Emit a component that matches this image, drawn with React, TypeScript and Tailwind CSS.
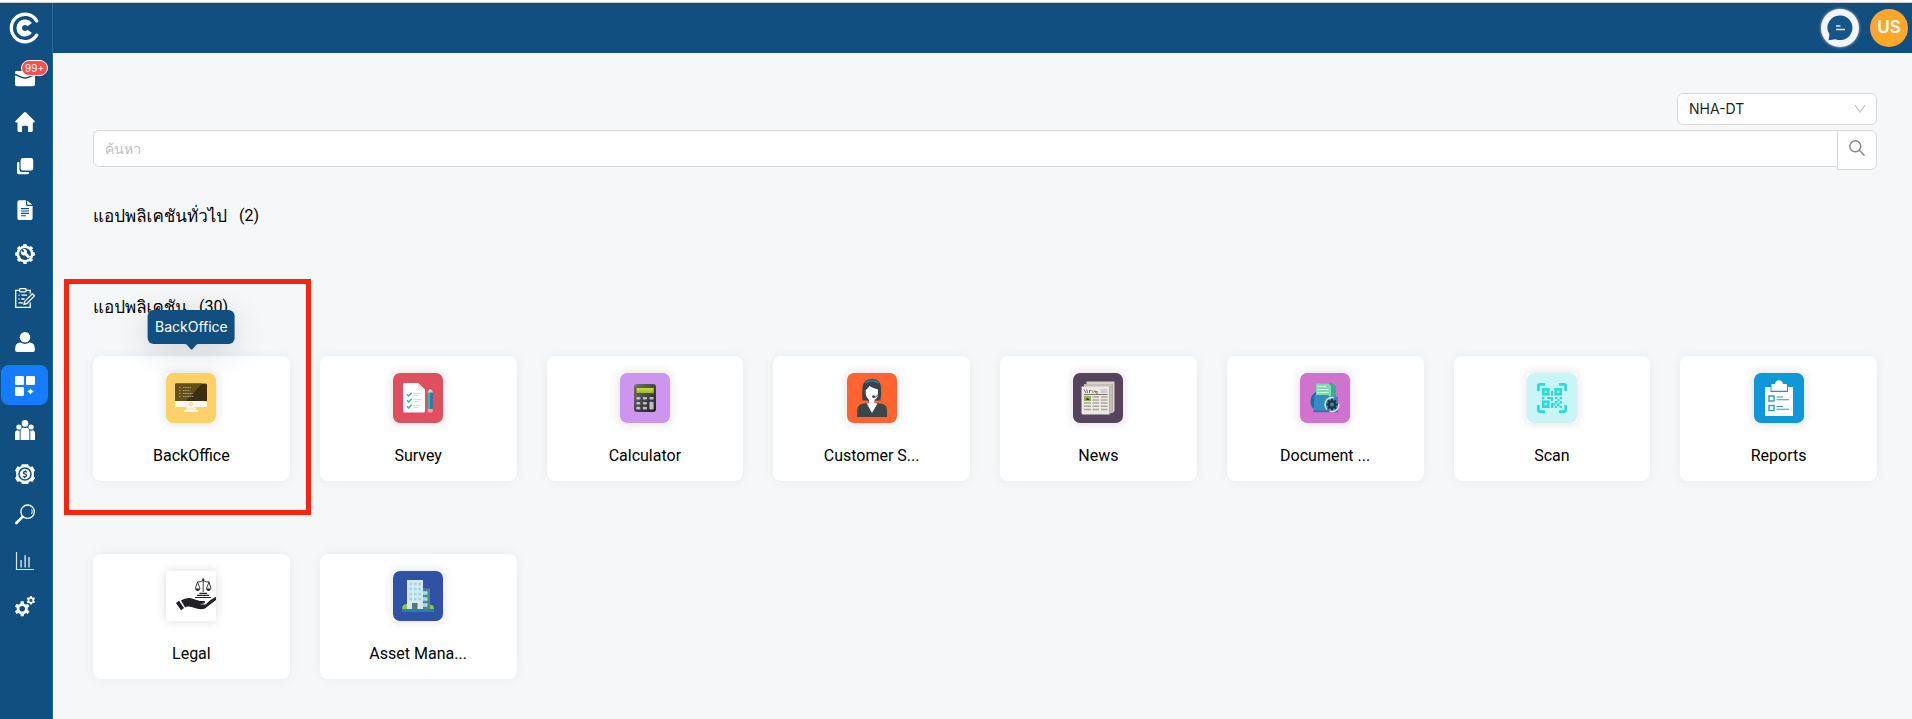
import type { ReactNode } from "react";

const NAVY = "#114f80";

/* ---------- sidebar icons, drawn on a 20 x 20 grid ---------- */

function gearPath(cx: number, cy: number, teeth: number, outer: number, inner: number) {
  const step = (Math.PI * 2) / teeth;
  const pts: string[] = [];
  for (let i = 0; i < teeth; i++) {
    const a = i * step - Math.PI / 2;
    const corners: [number, number][] = [
      [inner, -0.3],
      [outer, -0.2],
      [outer, 0.2],
      [inner, 0.3],
    ];
    for (const [r, f] of corners) {
      pts.push(`${(cx + r * Math.cos(a + f * step)).toFixed(2)} ${(cy + r * Math.sin(a + f * step)).toFixed(2)}`);
    }
  }
  return `M${pts.join("L")}Z`;
}

function Glyph({ children }: { children: ReactNode }) {
  return (
    <svg viewBox="0 -1 20 20" className="size-5 overflow-visible" fill="white" aria-hidden="true">
      {children}
    </svg>
  );
}

const navItems: { label: string; icon: ReactNode; badge?: string; active?: boolean }[] = [
  {
    label: "Inbox",
    badge: "99+",
    icon: (
      <Glyph>
        <path d="M0 5.500V4.200Q0 3 1.200 3H18.800Q20 3 20 4.200V5.500L13.500 8.500Q10 10 6.500 8.500Z" />
        <path d="M0 7.200 6.500 10Q10 11.400 13.500 10L20 7.200V16.300Q20 18.300 18 18.300H2Q0 18.300 0 16.300Z" />
      </Glyph>
    ),
  },
  {
    label: "Home",
    icon: (
      <Glyph>
        <path d="M8.700.7Q10-.5 11.300.7L19.600 8.900Q20.400 10.300 19 10.500H17.800V18.400Q17.800 20 16.200 20H13V15.200Q13 13.800 11.600 13.800H8.400Q7 13.800 7 15.200V20H4.200Q2.500 20 2.500 18.400V10.500H1Q-.4 10.300.4 8.900Z" />
      </Glyph>
    ),
  },
  {
    label: "Workspaces",
    icon: (
      <Glyph>
        <rect x="5.600" y="2" width="12.600" height="12.600" rx="2" />
        <path d="M2 7.400Q2 6 3.400 6H4.400V13.400Q4.400 15.900 7 15.900H14.200V16.600Q14.200 18.200 12.600 18.200H3.600Q2 18.200 2 16.600Z" />
      </Glyph>
    ),
  },
  {
    label: "Documents",
    icon: (
      <Glyph>
        <path d="M2.400 2Q2.400.2 4.200.2H11V4.500Q11 6 12.500 6H17.600V18Q17.600 19.900 15.800 19.900H4.200Q2.400 19.900 2.400 18ZM12.200.6 17.200 4.800H13Q12.200 4.800 12.200 4Z" />
        <path d="M6 8.600H14M6 11H14M6 13.400H14M6 15.800H11" stroke={NAVY} strokeWidth="1.100" />
      </Glyph>
    ),
  },
  {
    label: "Maintenance",
    icon: (
      <Glyph>
        <path d={gearPath(10, 10, 8, 10, 8.200)} />
        <circle cx="10" cy="10" r="8.400" />
        <circle cx="10" cy="10" r="5.900" fill={NAVY} />
        <path d="M6.200 6.400 8.200 8.300 9 8 9.300 7 7.500 5.400Q10 4.400 11.600 6.400 12.300 7.700 11.800 9L15.200 12.400 13.200 14.600 9.900 11.300Q8 12 6.600 10.400 5.300 8.600 6.200 6.400Z" />
      </Glyph>
    ),
  },
  {
    label: "Forms",
    icon: (
      <Glyph>
        <g fill="none" stroke="white" strokeWidth="1.300">
          <path d="M4.500 2.300H.7V19.300H15.200V14.500M11 2.300H15.200V5.600" />
          <rect x="4.600" y=".7" width="6.400" height="3.100" rx=".8" />
          <path d="M3.500 7.200H4.600M6.400 7.200H12M3.500 11H4.600M6.400 11H9.600M3.500 14.800H8" />
          <path d="M17.400 5.800 19.500 7.900 11.800 15.500 8.900 16.300 9.700 13.400Z" strokeLinejoin="round" />
        </g>
      </Glyph>
    ),
  },
  {
    label: "Profile",
    icon: (
      <Glyph>
        <circle cx="10" cy="5.300" r="5.200" />
        <path d="M0 17.500Q0 10.600 5.500 10.600 10 13.400 14.500 10.600 20 10.600 20 17.500 20 20 17.600 20H2.400Q0 20 0 17.500Z" />
      </Glyph>
    ),
  },
  {
    label: "Applications",
    active: true,
    icon: (
      <Glyph>
        <rect x="0" y="0" width="9" height="9" rx="1.200" />
        <rect x="11" y="0" width="9" height="9" rx="1.200" />
        <rect x="0" y="11" width="9" height="9" rx="1.200" />
        <path d="M15.500 12.200Q16.200 14.800 18.800 15.500 16.200 16.200 15.500 18.800 14.800 16.200 12.200 15.500 14.800 14.800 15.500 12.200Z" />
      </Glyph>
    ),
  },
  {
    label: "Teams",
    icon: (
      <Glyph>
        <circle cx="10" cy="3.400" r="3.300" />
        <circle cx="3.900" cy="7" r="2.600" />
        <circle cx="16.100" cy="7" r="2.600" />
        <path d="M5.600 20V11.500Q5.600 8 8.200 7.400 10 8.400 11.800 7.400 14.400 8 14.400 11.500V20Z" />
        <path d="M0 20V13.500Q0 10.600 2.300 10.300 3.500 10.900 4.700 10.400V20ZM20 20V13.500Q20 10.600 17.700 10.300 16.500 10.900 15.300 10.400V20Z" />
      </Glyph>
    ),
  },
  {
    label: "Finance",
    icon: (
      <Glyph>
        <path d="M6.800.2H13.200L13.800 2 15.600 3 17.500 2.300 20 6.500 18.800 8V12.500L20 14 17.500 18 15.600 17.300 13.800 18.200 13.200 20H6.800L6.200 18.200 4.400 17.300 2.500 18 0 14 1.200 12.500V8L0 6.500 2.500 2.300 4.400 3 6.200 2Z" />
        <circle cx="10" cy="10.100" r="6" fill="none" stroke={NAVY} strokeWidth="1.500" />
        <path d="M12 8.300Q10 6.800 8.600 8.300 8 9.600 10 10.100 12.100 10.700 11.400 12 10 13.400 8 12M10.500 6.300V7.700M9.500 12.700V14.200" fill="none" stroke={NAVY} strokeWidth="1.300" />
      </Glyph>
    ),
  },
  {
    label: "Find",
    icon: (
      <Glyph>
        <circle cx="12.600" cy="3.700" r="6.700" fill="none" stroke="white" strokeWidth="1.300" />
        <path d="M16.600 1.500Q18 3.700 16.600 6" fill="none" stroke="white" strokeWidth="1" />
        <path d="M7.500 8.800 1.300 15" stroke="white" strokeWidth="2.600" strokeLinecap="round" />
      </Glyph>
    ),
  },
  {
    label: "Statistics",
    icon: (
      <Glyph>
        <g fill="none" stroke="white" opacity=".85">
          <path d="M1.500 0V17.500H19" strokeWidth="1.200" />
          <path d="M6.100 8V15.500M10.100 3.200V15.500M14 5V15.500" strokeWidth="1.400" />
        </g>
      </Glyph>
    ),
  },
  {
    label: "Settings",
    icon: (
      <Glyph>
        <path fillRule="evenodd" d={`${gearPath(7.200, 12.800, 6, 7.600, 5.600)}M10 12.800A2.800 2.800 0 1 0 4.400 12.800 2.800 2.800 0 1 0 10 12.800Z`} />
        <path fillRule="evenodd" d={`${gearPath(15.900, 4.300, 6, 4.400, 3.300)}M17.500 4.300A1.600 1.600 0 1 0 14.300 4.300 1.600 1.600 0 1 0 17.500 4.300Z`} />
      </Glyph>
    ),
  },
];

/* ---------- application tiles, drawn on a 50 x 50 grid ---------- */

function Tile({ fill, children }: { fill: string; children: ReactNode }) {
  return (
    <svg viewBox="0 0 50 50" className="size-[50px] bg-white shadow-[0_0_10px_rgba(0,0,0,0.14)]" aria-hidden="true">
      <rect width="50" height="50" rx="7" fill={fill} />
      {children}
    </svg>
  );
}

const apps: { name: string; art: ReactNode; highlighted?: boolean }[] = [
  {
    name: "BackOffice",
    highlighted: true,
    art: (
      <Tile fill="#ffd166">
        <path d="M21 33H29L30 37H20Z" fill="#fff0c9" />
        <rect x="18" y="37" width="14" height="2" rx=".6" fill="#fffaf0" />
        <rect x="9" y="10.500" width="32" height="23.500" rx="1.300" fill="#f8f8f8" />
        <path d="M9 28V11.800Q9 10.500 10.300 10.500H39.700Q41 10.500 41 11.800V28Z" fill="#3b2f14" />
        <path d="M9 28V11.800Q9 10.500 10.300 10.500H36L20 28Z" fill="#65501c" />
        <path d="M13 14.500H15M17 14.500H25M13 17.500H15M17 17.500H24M13 20.500H15M17 20.500H27M13 23.500H15M17 23.500H28" stroke="#a8987a" strokeWidth="1.200" strokeDasharray="1.600 .6" />
        <circle cx="25" cy="31" r="1.500" fill="none" stroke="#ffd166" strokeWidth="1" />
      </Tile>
    ),
  },
  {
    name: "Survey",
    art: (
      <Tile fill="#e04f5f">
        <path d="M10 11.500Q10 10 11.500 10H25L32 16.500V38Q32 39.500 30.500 39.500H11.500Q10 39.500 10 38Z" fill="#fff" />
        <path d="M25 10V15Q25 16.500 26.500 16.500H32Z" fill="#e6e6e8" />
        <path d="M14 21.300 15.700 23 18.700 19.800M14 27.300 15.700 29 18.700 25.800M14 33.300 15.700 35 18.700 31.800" fill="none" stroke="#3db39e" strokeWidth="1.500" />
        <path d="M20.500 20.500H28.500M20.500 22.500H25.500M20.500 26.500H28.500M20.500 28.500H25.500M20.500 32.500H28.500M20.500 34.500H25.500" stroke="#dcdde0" strokeWidth="1" />
        <path d="M34.700 19 37.200 14.500 39.800 19V20H34.700Z" fill="#f0c8a0" />
        <path d="M36.400 16 37.200 14.500 38.100 16Z" fill="#333" />
        <rect x="34.700" y="19.500" width="2.600" height="16.500" fill="#27b5cf" />
        <rect x="37.300" y="19.500" width="2.500" height="16.500" fill="#1682a8" />
        <path d="M34.700 36H39.800V38Q39.800 39.500 38.300 39.500H36.200Q34.700 39.500 34.700 38Z" fill="#e9a58e" />
      </Tile>
    ),
  },
  {
    name: "Calculator",
    art: (
      <Tile fill="#cd95ee">
        <defs>
          <linearGradient id="calc-body" x1="0" y1="0" x2="1" y2="1">
            <stop offset="0" stopColor="#77777b" />
            <stop offset=".5" stopColor="#454547" />
            <stop offset="1" stopColor="#202022" />
          </linearGradient>
          <linearGradient id="calc-screen" x1="0" y1="0" x2="0" y2="1">
            <stop offset="0" stopColor="#cbe33b" />
            <stop offset="1" stopColor="#9db31f" />
          </linearGradient>
        </defs>
        <rect x="14" y="11" width="22" height="28" rx="3" fill="url(#calc-body)" />
        <rect x="16" y="14.500" width="18" height="6" rx=".6" fill="url(#calc-screen)" stroke="#333" strokeWidth=".6" />
        <g fill="#bdbdc0">
          <rect x="16.200" y="24" width="4.200" height="2.600" rx="1" />
          <rect x="22.800" y="24" width="4.200" height="2.600" rx="1" />
          <rect x="29.400" y="24" width="4.200" height="2.600" rx="1" />
          <rect x="16.200" y="29" width="4.200" height="2.600" rx="1" />
          <rect x="22.800" y="29" width="4.200" height="2.600" rx="1" />
          <rect x="16.200" y="33.800" width="4.200" height="2.600" rx="1" />
          <rect x="22.800" y="33.800" width="4.200" height="2.600" rx="1" />
          <rect x="29.400" y="28.800" width="4.200" height="7.600" rx="1" />
        </g>
      </Tile>
    ),
  },
  {
    name: "Customer S...",
    art: (
      <Tile fill="#ff6330">
        <path d="M15.500 27.500Q14.800 22 15.500 14 17 6 25 6 33 6 34 14 34.500 22 33.500 27.500H28V30H21.500V27.500Z" fill="#37444a" />
        <path d="M18.500 10Q25 5.500 31.500 10" fill="none" stroke="#1688b0" strokeWidth="1.600" />
        <path d="M18.700 17Q21 15.500 22.500 13 26 15 31 16.500V21.500Q30.500 25.500 27.500 27V30L31 31 25 40.500 18.800 31 22 30V27Q19.200 24.500 18.700 21Z" fill="#fff" />
        <path d="M10.200 44V37Q10.200 30.500 19.500 30L25 40 30.800 30Q40 30.500 40 37V44Z" fill="#3d474b" />
        <path d="M30.800 21.500Q29.500 24.500 26.800 24.500" fill="none" stroke="#37444a" strokeWidth=".9" />
        <circle cx="26.500" cy="23.600" r="1.400" fill="#37444a" />
      </Tile>
    ),
  },
  {
    name: "News",
    art: (
      <Tile fill="#56435c">
        <path d="M13.500 8.500H41.500V38L39.500 40H13.500Z" fill="#d9d4ca" />
        <path d="M11 11H39.500V39L37.500 40.500H11Z" fill="#c3bdb2" />
        <path d="M8.500 13.500H36.500V41.500H10Q8.500 41.500 8.500 40Z" fill="#ece9e3" />
        <path d="M36.500 13.500V41.500M39.500 11V38.500" stroke="#a8a299" strokeWidth=".7" />
        <path d="M11 16.500 13 20M13.800 16.300 14.500 20M16.500 20V17.500H18.500M20 17.500V20M21.500 18.500H24.500M22 17.500 23 20H25" fill="none" stroke="#777269" strokeWidth="1" />
        <path d="M11 21.500H34.500" stroke="#77736c" strokeWidth="1" />
        <path d="M27.500 16.800H34.500M27.500 19H34.500" stroke="#b9bec7" strokeWidth="1.300" />
        <rect x="11" y="23" width="7" height="5" fill="#8ab54f" />
        <path d="M12.500 26.800Q14.500 23.800 16.800 26.800Z" fill="#222" />
        <path d="M19.500 24H26M27.800 24H34.500M19.500 27H26M27.800 27H34.500M11 30H18M19.500 30H26M27.800 30H34.500M11 33.200H18M19.500 33.200H26M27.800 33.200H34.500M11 36.500H18M19.500 36.500H26M27.800 36.500H34.500" stroke="#aaa69f" strokeWidth="1.500" />
      </Tile>
    ),
  },
  {
    name: "Document ...",
    art: (
      <Tile fill="#d172cc">
        <path d="M16 19Q10.500 22 10.500 28.500 10.500 35 15.500 37Z" fill="#1170ab" />
        <path d="M20 10H32L36 14V25H20Z" fill="#39ad92" />
        <path d="M16 10.500H28.500L31 13V25H16Z" fill="#7fdcb1" />
        <path d="M17.500 13.500H26M17.500 16.500H28.500M17.500 19.500H28.500" stroke="#d9fbe9" strokeWidth="1.200" />
        <path d="M14.500 22H28L30 23.500H38V39H13.500Z" fill="#348cc2" />
        <path d="M13.500 37.500H38V39.200H13.500Z" fill="#2576aa" />
        <circle cx="32" cy="31.500" r="7" fill="none" stroke="#e2f2fa" strokeWidth="1.300" strokeDasharray="13 4 17 10" strokeLinecap="round" />
        <path fillRule="evenodd" d={`${gearPath(32, 31.500, 8, 5.800, 4.300)}M34 31.500A2 2 0 1 0 30 31.500 2 2 0 1 0 34 31.500Z`} fill="#28333e" />
      </Tile>
    ),
  },
  {
    name: "Scan",
    art: (
      <Tile fill="#caf5f7">
        <g fill="none" stroke="#25ddd9" strokeWidth="2.700">
          <path d="M11.300 18V13.300Q11.300 11.300 13.300 11.300H18M32 11.300H36.700Q38.700 11.300 38.700 13.300V18M38.700 32V36.700Q38.700 38.700 36.700 38.700H32M18 38.700H13.300Q11.300 38.700 11.300 36.700V32" />
          <rect x="16.300" y="16.300" width="5" height="5" />
          <rect x="28.700" y="16.300" width="5" height="5" />
          <rect x="16.300" y="28.700" width="5" height="5" />
        </g>
        <path
          d="M24 18H26V22.500H24ZM15 24H17.500V26H15ZM20 24H26V28H24V26H20ZM28 24H30.500V26H28ZM32.500 24H35V26H32.500ZM30.500 26H32.500V28H30.500ZM24 30H28V28H30.500V30.500H32.500V28H35V30.500H32.500V33H35V35H32.500V33H30V30.500H28V32.500H26V35H24ZM28 33H30V35H28Z"
          fill="#25ddd9"
        />
      </Tile>
    ),
  },
  {
    name: "Reports",
    art: (
      <Tile fill="#0e97d9">
        <path d="M11 14H16.500V19H34V14H39V43H11Z" fill="#fff" />
        <path d="M17.500 11H21Q21.500 7.500 25 7.300 28.500 7.500 29 11H33V17.700H17.500Z" fill="#fff" />
        <g fill="none" stroke="#3197c9">
          <rect x="15" y="23" width="5" height="5" strokeWidth="1.400" />
          <rect x="15" y="32.500" width="5" height="5" strokeWidth="1.400" />
          <path d="M22.500 24H29M22.500 26.800H35M22.500 33.500H29M22.500 36.300H35" strokeWidth="1.100" />
        </g>
      </Tile>
    ),
  },
  {
    name: "Legal",
    art: (
      <Tile fill="#ffffff">
        <g fill="none" stroke="#222126" strokeWidth=".9">
          <path d="M37.200 7.500V21M31.500 10.800Q34 11.500 37.200 9.500 40.500 11.500 43 10.800M31.500 11 29.300 17.500M31.500 11 34 17.500M43 11 40.500 17.500M43 11 45 17.500" />
          <path d="M33.500 22.300H41M31 24.300H43M29 26.500H45" strokeWidth="1.200" />
        </g>
        <path d="M29 17.500H34.500Q33 20 31.700 20 30 20 29 17.500ZM39.700 17.500H45.300Q44 20 42.500 20 41 20 39.700 17.500Z" fill="#222126" />
        <circle cx="37.200" cy="8.500" r="1.100" fill="#222126" />
        <path d="M10 32 13 29.700 18 37 15 39.200ZM15 29.500Q19 26.500 24 27L34 30H38.500Q40 31.500 37.500 32.500L33.500 33.200 39.500 33.600Q44 28.500 50 25.800V29Q44 33.500 39 37.500 35.500 38.700 31.500 37.700L24.500 35.700Q21 35 19 36.300Z" fill="#222126" />
      </Tile>
    ),
  },
  {
    name: "Asset Mana...",
    art: (
      <Tile fill="#3052a5">
        <path d="M9 38Q9 33 14 33V38ZM36 38V34Q41 33 41 38Z" fill="#8ac63f" />
        <path d="M29 17.500H37V38H29Z" fill="#5c7f8a" />
        <path d="M14 9H30V38H14Z" fill="#dbe6ea" />
        <path d="M16.500 13H28.500M16.500 18H28.500M16.500 23H28.500M16.500 28H28.500" stroke="#84e0f5" strokeWidth="2.300" strokeDasharray="2.500 2" />
        <path d="M29.800 22H34.500M29.800 28H34.500M29.800 34H34.500" stroke="#92e6f8" strokeWidth="3.500" />
        <rect x="19" y="32" width="5.500" height="6" fill="#567681" />
        <rect x="9" y="38" width="32" height="3" fill="#1a88ac" />
      </Tile>
    ),
  },
];

function Logo() {
  return (
    <svg viewBox="0 0 32 32" className="size-8" fill="none" stroke="white" role="img" aria-label="Home">
      <path d="M27.700 8.800A13.700 13.700 0 1 0 27.700 23.200" strokeWidth="3.300" strokeLinecap="round" />
      <path d="M20.700 12.600A5.800 5.800 0 1 0 20.700 19.400" strokeWidth="5.600" />
    </svg>
  );
}

function Sidebar() {
  return (
    <aside className="flex w-[53px] shrink-0 flex-col border-r border-[#2a68a0] bg-[#114f80]">
      <a href="#home" className="flex h-[54px] items-center pb-1 pl-[9px]">
        <Logo />
      </a>
      <nav className="flex flex-col gap-1 pl-px">
        {navItems.map((item) => (
          <a
            key={item.label}
            href={`#${item.label.toLowerCase()}`}
            aria-label={item.label}
            className={`relative flex h-10 w-[47px] items-center justify-center rounded-lg ${item.active ? "bg-[#167cff]" : ""}`}
          >
            {item.icon}
            {item.badge && (
              <span className="absolute top-[3px] right-0 flex h-4 w-[27px] items-center justify-center rounded-full border border-white bg-[#ff4d4f] font-[Inter,sans-serif] text-[10px] leading-none text-white">
                {item.badge}
              </span>
            )}
          </a>
        ))}
      </nav>
    </aside>
  );
}

function Header() {
  return (
    <header className="flex h-[50px] items-center justify-end gap-[11px] bg-[#114f80] pr-1">
      <button type="button" aria-label="Messages" className="flex size-[38px] items-center justify-center rounded-full bg-[#f3f5f9] shadow-[0_0_2px_1px_rgba(160,160,160,0.7)]">
        <svg viewBox="0 0 26 26" className="size-[26px]" aria-hidden="true">
          <path d="M13.500.5A12.300 12.300 0 1 1 8.500 24.200L1.500 25.300 2.500 19.500A12.300 12.300 0 0 1 13.500.5Z" fill="#155587" />
          <path d="M9 11H13.500M9 14.500H18" stroke="#dfe9f1" strokeWidth="1.300" />
        </svg>
      </button>
      <button type="button" className="size-[38px] rounded-full bg-[#ffa62b] font-[Inter,sans-serif] text-[17px] font-semibold text-white">
        US
      </button>
    </header>
  );
}

function AppCard({ name, art, highlighted }: { name: string; art: ReactNode; highlighted?: boolean }) {
  return (
    <li className="relative">
      <a href={`#${name}`} className="flex flex-col items-center rounded-lg bg-white pt-[17px] pb-[13px] shadow-[0_0_12px_rgba(0,0,0,0.06)]">
        {art}
        <span className="mt-[21px] text-base text-black">{name}</span>
      </a>
      {highlighted && (
        <>
          <div className="pointer-events-none absolute -top-[77px] -right-[21px] -bottom-[34px] -left-[29px] border-5 border-[#ff2212]" />
          <div role="tooltip" className="absolute bottom-full left-1/2 mb-3 -translate-x-1/2 rounded-md bg-[#114f80] px-[7px] py-1.5 font-[Inter,sans-serif] text-sm leading-[22px] text-white shadow-[0_6px_32px_rgba(0,0,0,0.16)]">
            {name}
            <svg viewBox="0 0 14 6" className="absolute top-full left-1/2 h-1.5 w-3.5 -translate-x-1/2" aria-hidden="true">
              <path d="M0 0H14Q12.500 0 11.500 1L8 5Q7 6 6 5L2.500 1Q1.500 0 0 0Z" fill={NAVY} />
            </svg>
          </div>
        </>
      )}
    </li>
  );
}

function SectionTitle({ title, count }: { title: string; count: number }) {
  return (
    <h2 className="flex gap-3 leading-7 text-black">
      <span className="font-[Loma,'Noto_Sans_Thai_Looped','Noto_Sans',sans-serif] text-[17px]">{title}</span>
      <span className="text-base leading-7">({count})</span>
    </h2>
  );
}

export default function App() {
  return (
    <div className="flex min-h-screen flex-col bg-[#f5f7f9] font-[Roboto,Loma,'Noto_Sans_Thai_Looped','Noto_Sans',sans-serif]">
      <div className="h-[3px] border-b border-[#cfcfcf] bg-white" />
      <div className="flex grow">
        <Sidebar />
        <div className="flex min-w-0 grow flex-col">
          <Header />
          <main className="flex flex-col pt-10 pr-[35px] pb-10 pl-10">
            <div className="relative self-end">
              <select aria-label="Organization" defaultValue="NHA-DT" className="h-8 w-[200px] appearance-none rounded-md border border-[#d9d9d9] bg-white px-[11px] font-[Inter,sans-serif] text-sm text-[#1f1f1f]">
                <option>NHA-DT</option>
              </select>
              <svg viewBox="0 0 12 12" className="pointer-events-none absolute top-2.5 right-[11px] size-3" fill="none" stroke="#bfbfbf" strokeWidth="1.100" aria-hidden="true">
                <path d="M1 2 6 9 11 2" />
              </svg>
            </div>
            <form role="search" className="mt-[5px] flex items-start" onSubmit={(e) => e.preventDefault()}>
              <input type="text" aria-label="ค้นหา" placeholder="ค้นหา" className="h-[37px] min-w-0 grow rounded-l-md border border-[#d9d9d9] bg-white px-[11px] text-sm placeholder:text-[#bfbfbf]" />
              <button type="submit" aria-label="ค้นหา" className="-ml-px flex size-10 items-center justify-center rounded-r-md border border-[#d9d9d9] bg-white pb-1">
                <svg viewBox="0 0 16 16" className="size-4" fill="none" stroke="#858585" strokeWidth="1.400" aria-hidden="true">
                  <circle cx="6.300" cy="6.300" r="5.500" />
                  <path d="M10.300 10.300 15.500 15.500" />
                </svg>
              </button>
            </form>

            <section className="mt-8">
              <SectionTitle title="แอปพลิเคชันทั่วไป" count={2} />
            </section>

            <section className="mt-[63px]">
              <SectionTitle title="แอปพลิเคชัน" count={30} />
              <ul className="mt-[35px] grid grid-cols-8 gap-x-[30px] gap-y-[73px]">
                {apps.map((app) => (
                  <AppCard key={app.name} {...app} />
                ))}
              </ul>
            </section>
          </main>
        </div>
      </div>
    </div>
  );
}
